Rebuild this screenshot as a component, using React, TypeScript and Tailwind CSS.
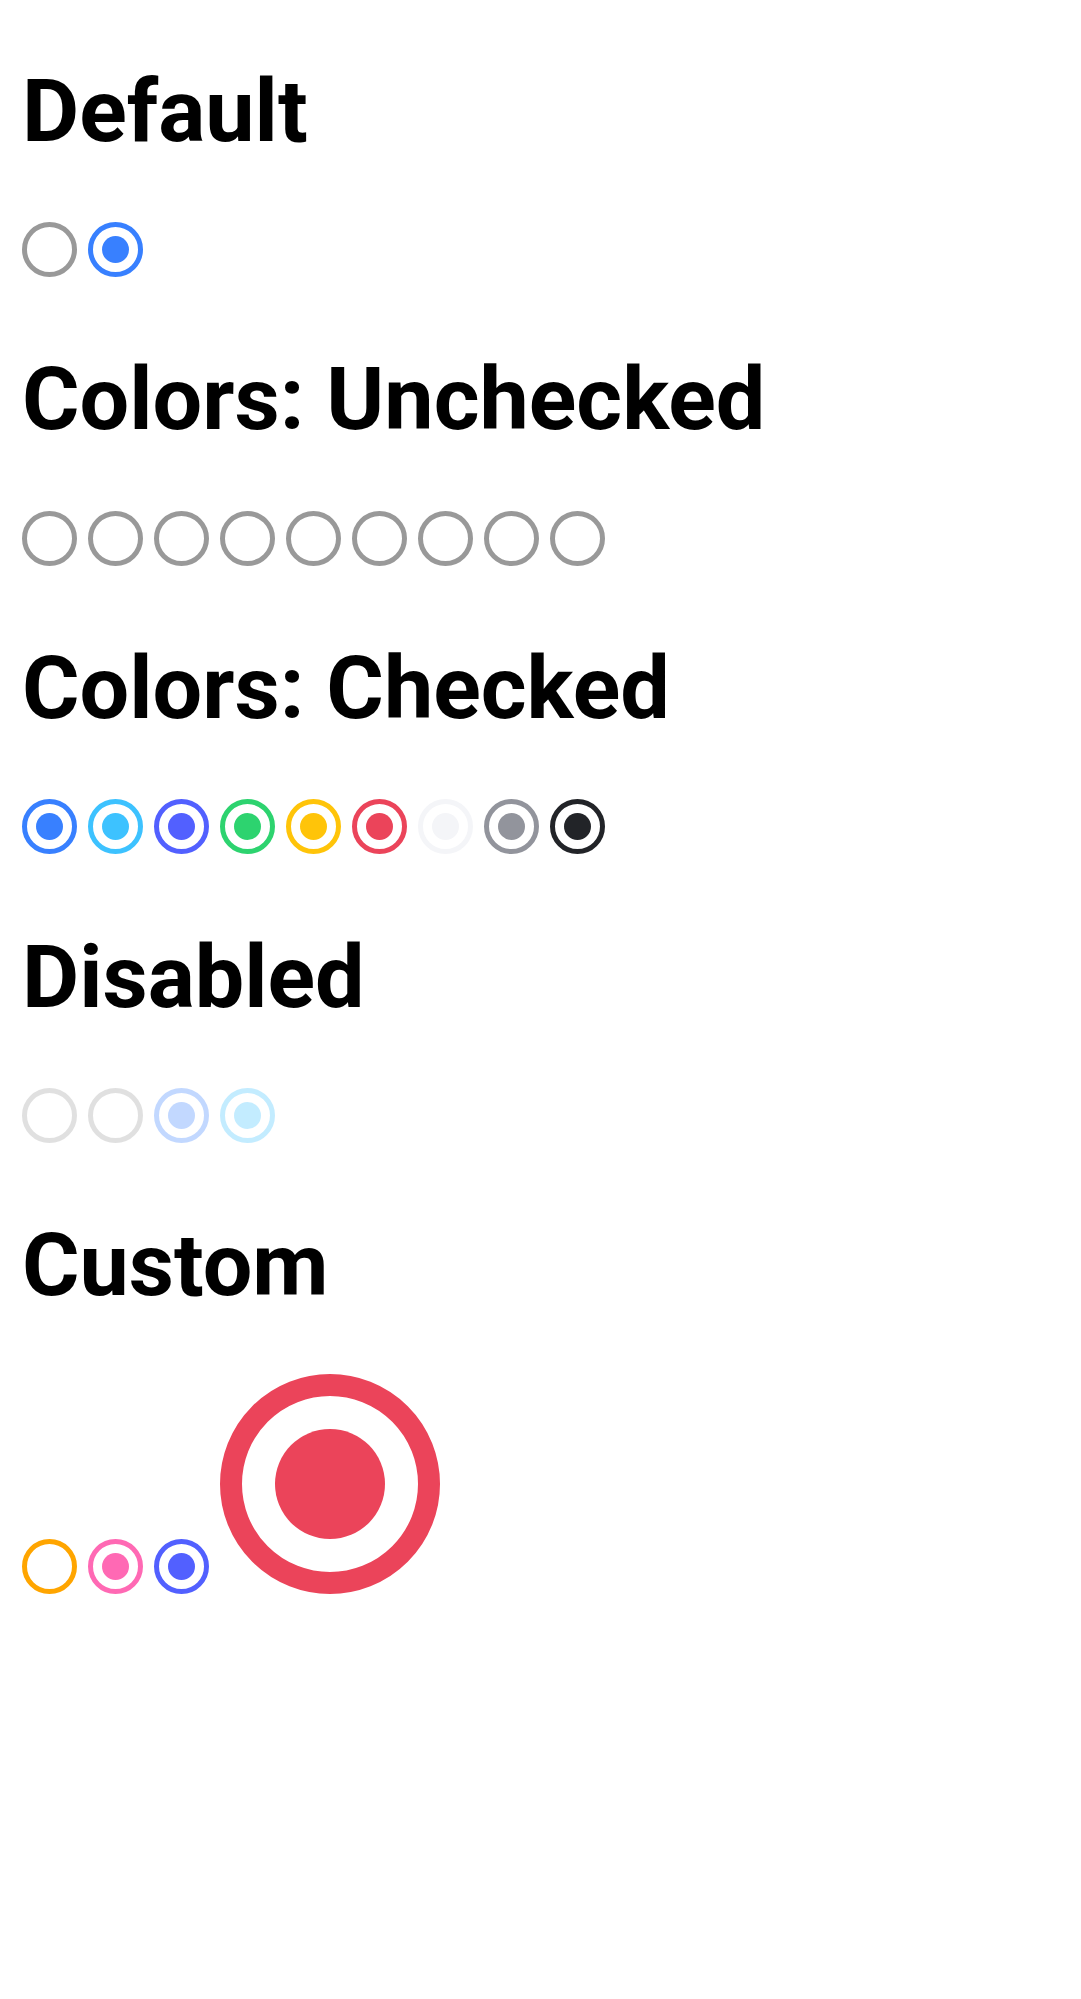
type Radio = { color: string; checked?: boolean; disabled?: boolean };

const PRIMARY = "#3880ff";

function RadioDot({ color, checked, disabled, big }: Radio & { big?: boolean }) {
    return (
        <span
            className={
                "flex shrink-0 items-center justify-center rounded-full " +
                (big ? "h-[220px] w-[220px] border-[22px] " : "h-[55px] w-[55px] border-[5px] ") +
                (disabled ? "opacity-30" : "")
            }
            style={{ borderColor: color }}
        >
            {checked && (
                <span
                    className={"rounded-full " + (big ? "h-[110px] w-[110px]" : "h-[27px] w-[27px]")}
                    style={{ backgroundColor: color }}
                />
            )}
        </span>
    );
}

function Section({ title, first, children, rowClass }: { title: string; first?: boolean; children: React.ReactNode; rowClass?: string }) {
    return (
        <section className={first ? "" : "mt-[70.2px]"}>
            <h1 className="text-[88px] leading-[103px] font-bold text-black">{title}</h1>
            <div className={"flex items-end gap-[11px] " + (rowClass || "mt-[60.5px]")}>{children}</div>
        </section>
    );
}

const checkedColors = ["#3880ff", "#3dc2ff", "#5260ff", "#2dd36f", "#ffc409", "#eb445a", "#f4f5f8", "#92949c", "#222428"];

export default function App() {
    return (
        <div className="min-h-[1999px] bg-white pl-[22px] pt-[58.5px]" style={{ fontFamily: "Roboto, 'Liberation Sans', sans-serif" }}>
            <Section title="Default" first>
                <RadioDot color="#999999" />
                <RadioDot color={PRIMARY} checked />
            </Section>

            <Section title="Colors: Unchecked">
                {checkedColors.map((c) => (
                    <RadioDot key={c} color="#999999" />
                ))}
            </Section>

            <Section title="Colors: Checked">
                {checkedColors.map((c) => (
                    <RadioDot key={c} color={c} checked />
                ))}
            </Section>

            <Section title="Disabled">
                <RadioDot color="#999999" disabled />
                <RadioDot color="#999999" disabled />
                <RadioDot color="#3880ff" checked disabled />
                <RadioDot color="#3dc2ff" checked disabled />
            </Section>

            <Section title="Custom" rowClass="mt-[57.5px]">
                <RadioDot color="#ffa500" />
                <RadioDot color="#ff69b4" checked />
                <RadioDot color="#5260ff" checked />
                <RadioDot color="#eb445a" checked big />
            </Section>
        </div>
    );
}
